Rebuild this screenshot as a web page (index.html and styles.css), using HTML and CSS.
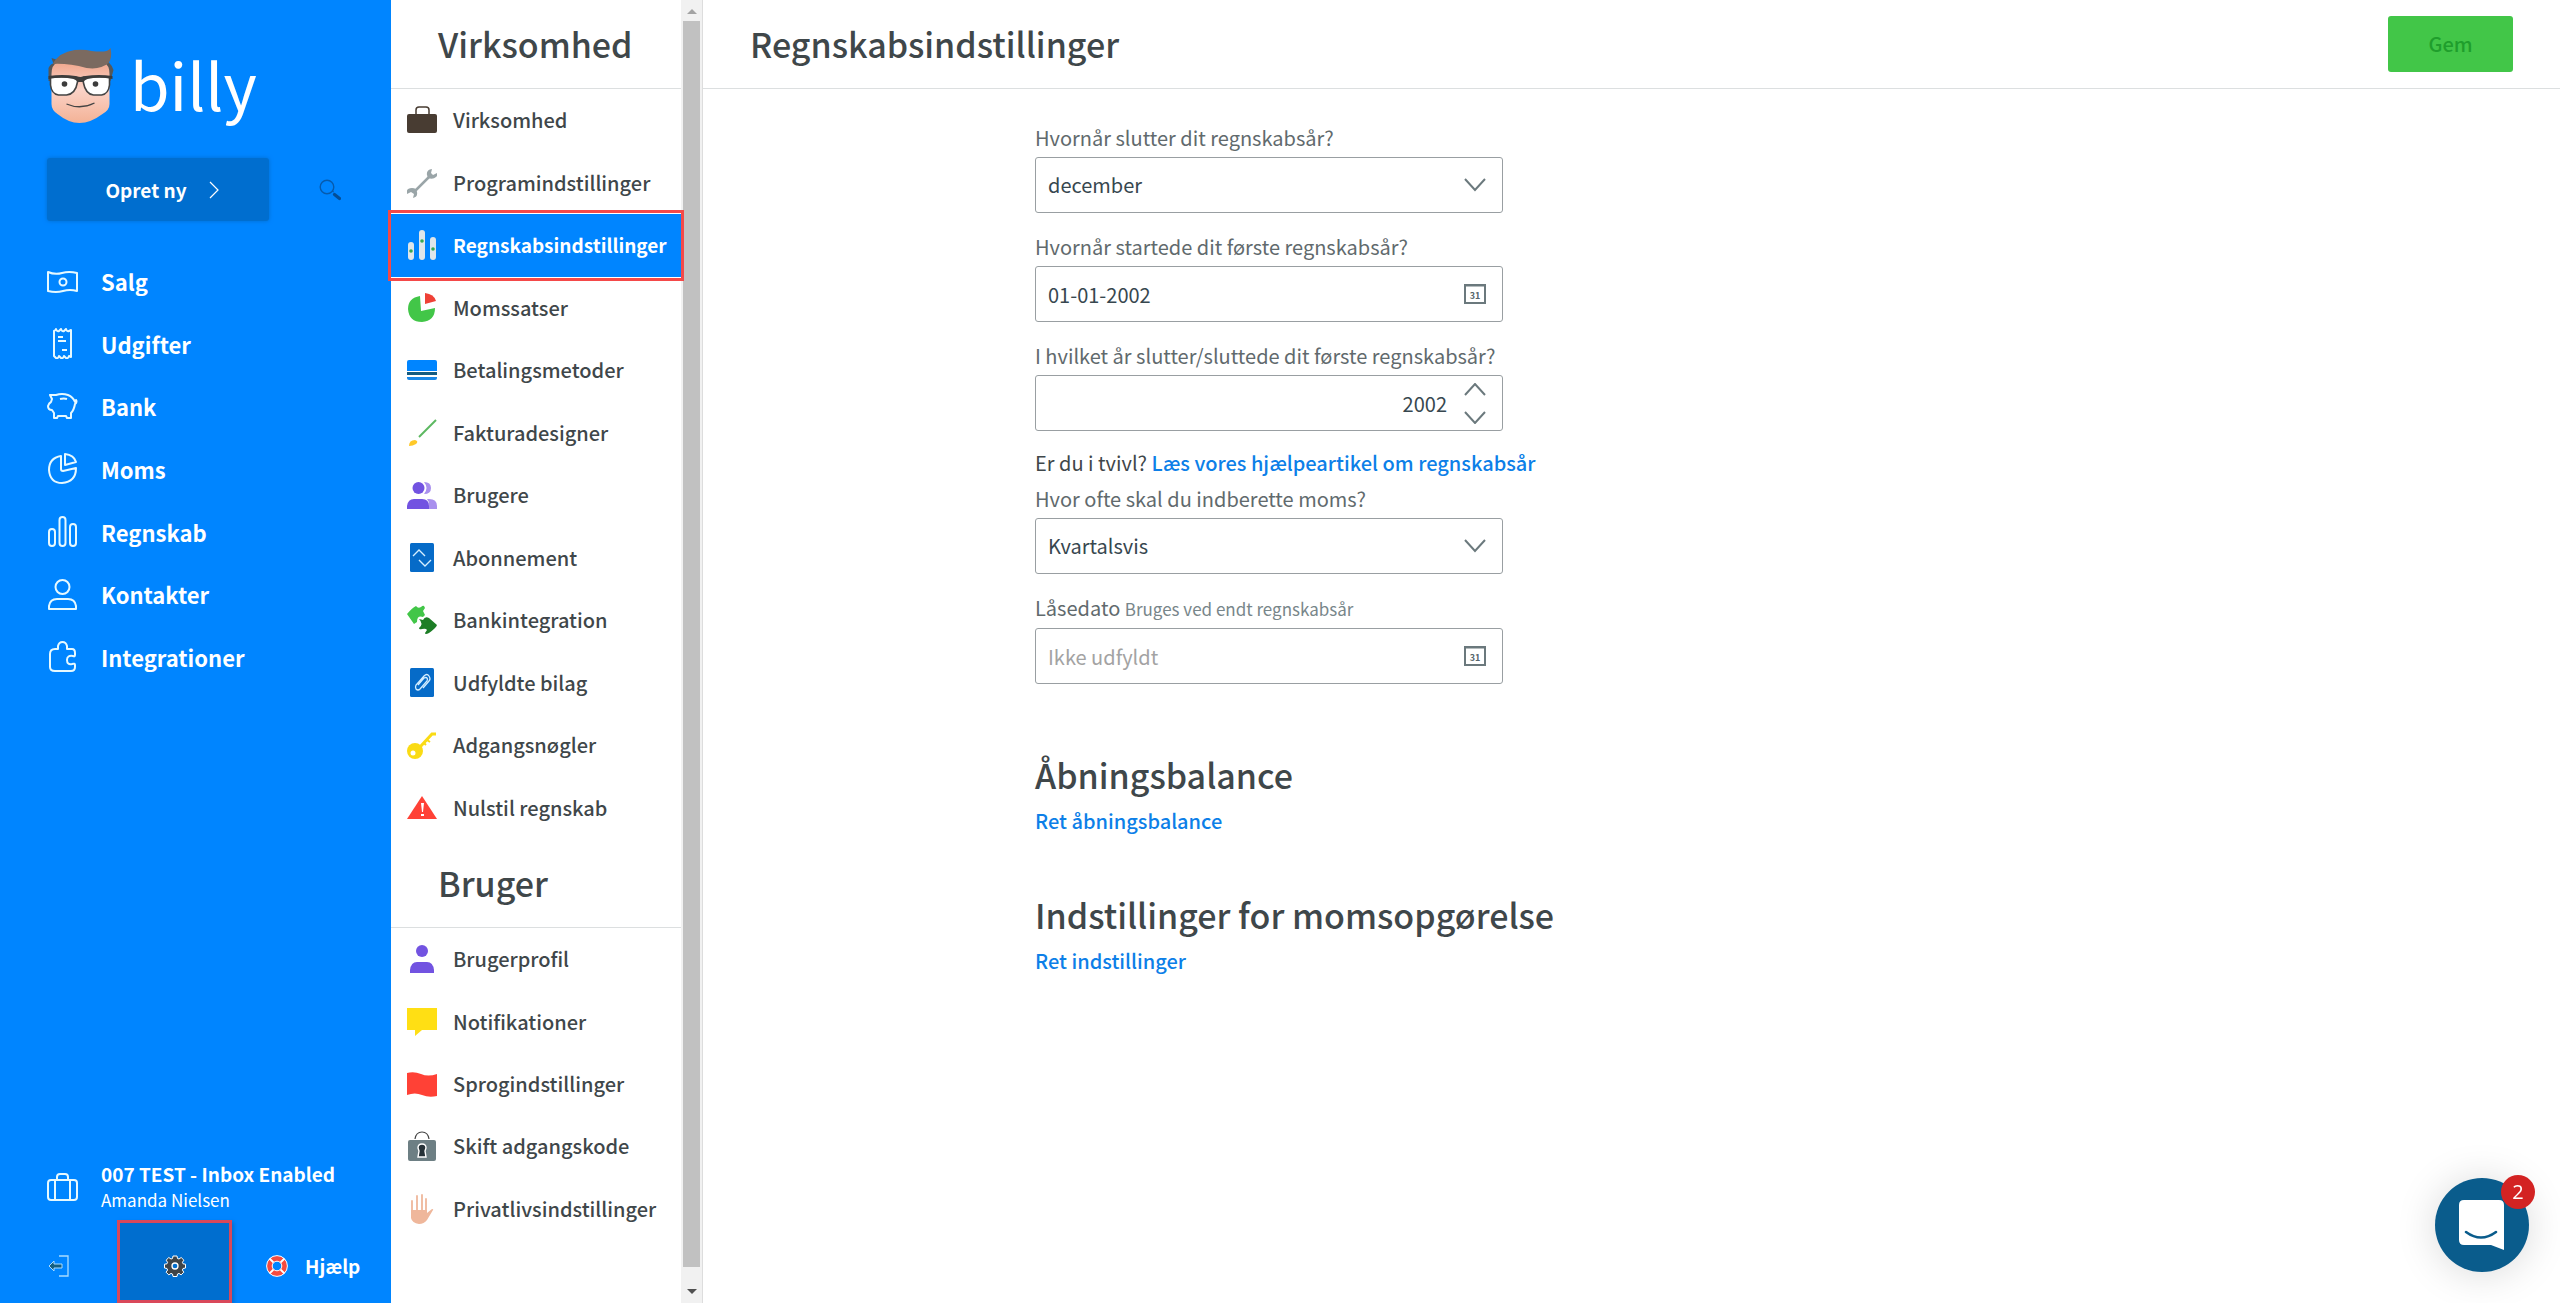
FILE: index.html
```html
<!DOCTYPE html>
<html lang="da">
<head>
    <meta charset="utf-8">
    <title>Regnskabsindstillinger - Billy</title>
    <meta name="viewport" content="width=device-width, initial-scale=1">
    <link rel="stylesheet" href="styles.css">
</head>
<body>
    <aside class="sidebar">
        <a class="logo" href="#">
            <svg class="logo-face" viewBox="0 0 66 76" aria-hidden="true">
                <defs>
                    <linearGradient id="skin" x1="0" y1="0" x2="0" y2="1">
                        <stop offset="0" stop-color="#f0a68c"/>
                        <stop offset=".45" stop-color="#fbd3c8"/>
                        <stop offset="1" stop-color="#f3b296"/>
                    </linearGradient>
                </defs>
                <path d="M1 33V20q3-5 5-4l-2-6 6 2q22-10 46 4l5-2q4 4 5 8l-3 11z" fill="#55585a"/>
                <path d="M4 26q0-9 6-12h46q6 3 6 12v30q0 6-7 10-12 9-23 9T10 66q-6-4-6-10z" fill="url(#skin)"/>
                <path d="M5 16Q12 4 27 2q10-1 17 1 10 1 15 0 3-1 4-3 2 10-2 15-8 7-22 5Q20 15 5 16z" fill="#7b6a60"/>
                <path d="M3 29h25q3 0 2 5-2 12-11 13H11q-7-1-8-10zM36 29h26v8q-1 9-8 10h-8q-8-1-10-12-1-6 0-6z" fill="#fff" stroke="#444" stroke-width="1.6"/>
                <path d="M1 28q14-2 27 0 4 1 5 1l5-1q13-2 27 0v3q-14-3-25 0-3 1-4 3h-6q-1-2-4-3-12-3-25 0z" fill="#3c3c3c"/>
                <circle cx="17" cy="36" r="2.8" fill="#3c3c3c"/>
                <circle cx="48" cy="36" r="2.8" fill="#3c3c3c"/>
                <path d="M19 56q14 6 28-1" fill="none" stroke="#444" stroke-width="1.3"/>
            </svg>
            <span class="logo-text">billy</span>
        </a>

        <div class="actions">
            <button class="create" type="button">
                Opret ny
                <svg width="10" height="18" viewBox="0 0 10 18" aria-hidden="true"><path d="M1 1l8 8-8 8" fill="none" stroke="#fff" stroke-width="1.2"/></svg>
            </button>
            <button class="search" type="button" aria-label="Søg">
                <svg width="22" height="22" viewBox="0 0 22 22" aria-hidden="true"><circle cx="8" cy="8" r="6.8" fill="none" stroke="#075bad" stroke-width="1.4"/><path d="M13 12l2 1" stroke="#075bad"/><path d="M15.500 15.500l5 4" stroke="#044e96" stroke-width="3.200" stroke-linecap="round"/></svg>
            </button>
        </div>

        <nav class="main-nav">
            <a href="#">
                <svg class="icon" viewBox="0 0 31 31"><path d="M1 6q7 3 14 1t15 0v18q-7-2-14 0t-15 0z"/><circle cx="16" cy="16" r="3.500"/></svg>
                Salg
            </a>
            <a href="#">
                <svg class="icon" viewBox="0 0 31 31"><path d="M7 3q2-1 2-2 1 3 3 2 2-2 2-2 1 3 3 2 2-2 2-2 1 3 3 2l2-1v27q-2-1-2-1-1 3-3 2-2-2-2-2-1 3-3 2-2-2-2-2-1 3-3 2-2-2-2-2zM11 9h5M11 13h8M15 22h5"/></svg>
                Udgifter
            </a>
            <a href="#">
                <svg class="icon" viewBox="0 0 31 31"><path d="M3 4h6q6-2 12 0 5 2 7 7l1-2q1 1 0 3l-1 1q-1 6-4 9v5h-4l-1-2h-8l-1 2H7v-5l-2-3q-4 0-4-4 1-3 3-4l1-3zM13 8q4-1 7 0"/></svg>
                Bank
            </a>
            <a href="#">
                <svg class="icon" viewBox="0 0 31 31"><path d="M14 3Q2 5 2 17q1 13 13 13 14-1 14-15L16 18q-2 0-2-2zM18 1v11l11-3Q27 2 18 1z"/></svg>
                Moms
            </a>
            <a href="#">
                <svg class="icon" viewBox="0 0 31 31"><rect x="2" y="13" width="6" height="17" rx="3"/><rect x="12.500" y="1" width="6" height="29" rx="3"/><rect x="23" y="8" width="6" height="22" rx="3"/></svg>
                Regnskab
            </a>
            <a href="#">
                <svg class="icon" viewBox="0 0 31 31"><circle cx="15.500" cy="8" r="7"/><path d="M2 30v-3q1-7 8-7h11q7 0 8 7v3z"/></svg>
                Kontakter
            </a>
            <a href="#">
                <svg class="icon" viewBox="0 0 31 31"><path d="M11 8V5q1-4 4.500-4T20 5v3h5q3 0 3 4v2q0 2-2 1-6-1-6 4t5 4q3-1 3 1v2q0 4-4 4H8q-5 0-5-4V13q0-5 5-5z"/></svg>
                Integrationer
            </a>
        </nav>

        <div class="account">
            <svg class="icon" viewBox="0 0 31 31" aria-hidden="true"><rect x="1" y="8" width="29" height="20" rx="3"/><path d="M8 8v20M23 8v20M10 8V5q0-3 3-3h5q3 0 3 3v3"/></svg>
            <div>
                <strong class="company">007 TEST - Inbox Enabled</strong>
                <span class="user">Amanda Nielsen</span>
            </div>
        </div>

        <div class="tools">
            <a class="tool" href="#" aria-label="Log ud">
                <svg width="22" height="22" viewBox="0 0 22 22"><path d="M11 1h9v20h-9" fill="none" stroke="#a8dcff" stroke-width="1.300"/><path d="M1 11l5-5v3h8v4H6v3z" fill="#155f80" stroke="#a8dcff"/></svg>
            </a>
            <a class="tool tool-active" href="#" aria-label="Indstillinger">
                <svg width="22" height="22" viewBox="0 0 22 22"><path d="M9 1h4l.5 2.500 1.500.5 2.200-1.500 2.700 2.700L18.400 7.300l.6 1.500 2.500.4v3.800l-2.500.5-.6 1.500 1.400 2.200-2.700 2.700L15 18.400l-1.500.6-.5 2.500H9L8.500 19 7 18.400l-2.200 1.500-2.700-2.700L3.600 15 3 13.500.5 13V9.200L3 8.800l.6-1.500-1.500-2.100 2.700-2.700L7 4l1.500-.5z" fill="#3f4447" stroke="#fff"/><circle cx="11" cy="11" r="3" fill="#006ecf" stroke="#fff" stroke-width="1.300"/></svg>
            </a>
            <a class="tool tool-help" href="#">
                <svg width="22" height="22" viewBox="0 0 22 22" aria-hidden="true"><circle cx="11" cy="11" r="7.500" fill="none" stroke="#f54b3f" stroke-width="5.500"/><g fill="none" stroke="#fff"><circle cx="11" cy="11" r="10.400"/><circle cx="11" cy="11" r="4.800"/><path d="M3.500 3.500l4 4M18.500 3.500l-4 4M3.500 18.500l4-4M18.500 18.500l-4-4" stroke-width="1.800"/></g></svg>
                Hjælp
            </a>
        </div>
    </aside>

    <div class="settings">
        <div class="settings-body">
            <h2 class="title">Virksomhed</h2>
            <nav class="sub-nav sub-nav-company">
                <a href="#">
                    <svg class="glyph" viewBox="0 0 30 30"><path d="M9 10V5q0-3 3-3h7q3 0 3 3v5" fill="none" stroke="#483c32" stroke-width="1.500"/><rect y="9" width="30" height="19" rx="2" fill="#483c32"/></svg>
                    Virksomhed
                </a>
                <a href="#">
                    <svg class="glyph" viewBox="0 0 30 30"><path d="M8 23L23 8" stroke="#9aa5a8" stroke-width="2.500"/><path d="M25 1q-6 1-5 6l1 3q5 2 8-1 2-2 1-4l-4 2-2-2zM1 21q4-2 8 0l1 3q1 5-4 6l1-4-3-2-4 2q-1-3 1-5z" fill="#9aa5a8"/></svg>
                    Programindstillinger
                </a>
                <a class="active" href="#">
                    <svg class="glyph" viewBox="0 0 30 30"><g fill="#dfe6ea"><rect x="1" y="12" width="6" height="18" rx="3"/><rect x="12" y="0" width="6" height="30" rx="3"/><rect x="23" y="7" width="6" height="23" rx="3"/></g><g fill="#35a853"><circle cx="4" cy="21" r="1.800"/><circle cx="15" cy="11" r="1.800"/><circle cx="26" cy="19" r="1.800"/></g></svg>
                    Regnskabsindstillinger
                </a>
                <a href="#">
                    <svg class="glyph" viewBox="0 0 30 30"><path d="M13 3Q1 5 1 16q1 13 14 13 13-1 13-14l-14 3z" fill="#42c648"/><path d="M18 0v11l11-3Q27 1 18 0z" fill="#ef4136"/></svg>
                    Momssatser
                </a>
                <a href="#">
                    <svg class="glyph" viewBox="0 0 30 30"><path d="M0 16V7q0-2 2-2h26q2 0 2 2v9z" fill="#0085ff"/><path d="M0 17h30v3H0z" fill="#155b80"/><path d="M0 22h30v1q0 2-2 2H2q-2 0-2-2z" fill="#1787e8"/></svg>
                    Betalingsmetoder
                </a>
                <a href="#">
                    <svg class="glyph" viewBox="0 0 30 30"><path d="M12 19L29 2" stroke="#5cb860" stroke-width="2"/><path d="M2 28q0-6 6-6 4 1 1 4-3 2-7 2z" fill="#ffc928"/></svg>
                    Fakturadesigner
                </a>
                <a href="#">
                    <svg class="glyph" viewBox="0 0 30 30"><path d="M17 2q7 0 7 6t-7 6q5-6 0-12zM22 29v-4q0-4-2-6 10-1 10 7v3z" fill="#a990ee"/><circle cx="11.500" cy="8" r="6" fill="#7253e1"/><path d="M0 29v-3q1-7 7-7h8q7 0 7 7v3z" fill="#7253e1"/></svg>
                    Brugere
                </a>
                <a href="#">
                    <svg class="glyph" viewBox="0 0 30 30"><rect x="3" y="0" width="24" height="29" rx="1.500" fill="#066bc8"/><path d="M6 13l6-6 6 6M12 17l6 6 6-6" fill="none" stroke="#d4eeff" stroke-width="1.400"/></svg>
                    Abonnement
                </a>
                <a href="#">
                    <svg class="glyph" viewBox="0 0 30 30"><path d="M0 9q5-6 9-8 2 3 5 1 2-2 3-1l1 2-2 3 2 4-2 2q-6-2-6 5l-3 2z" fill="#42c648"/><path d="M12 14l4 1q2-4 6-2l8 7q-1 3-8 8-4 2-4 0l2-3q-1-2-5-1-3 1-3-1 5-4 0-9z" fill="#1d7e26"/></svg>
                    Bankintegration
                </a>
                <a href="#">
                    <svg class="glyph" viewBox="0 0 30 30"><rect x="3" y="0" width="24" height="29" rx="1.500" fill="#066bc8"/><path d="M11 17l6-7q2-1 3 0t0 3l-7 8q-2 2-4 0-1-2 0-4l8-9q3-3 5 0 2 3 0 5l-6 7" fill="none" stroke="#d4eeff" stroke-width="1.300"/></svg>
                    Udfyldte bilag
                </a>
                <a href="#">
                    <svg class="glyph" viewBox="0 0 30 30"><path d="M13 17L25 4h4" fill="none" stroke="#fadb14" stroke-width="3"/><path d="M20 10l3 2M17 13l2 2" stroke="#fadb14" stroke-width="2"/><circle cx="8" cy="21" r="8" fill="#fadb14"/><circle cx="6" cy="23" r="2.500" fill="#fff"/></svg>
                    Adgangsnøgler
                </a>
                <a href="#">
                    <svg class="glyph" viewBox="0 0 30 30"><path d="M15 3l15 23H0z" fill="#ff4136"/><path d="M14 10h3l-1 9h-1zM14 21h3v2h-3z" fill="#fff"/></svg>
                    Nulstil regnskab
                </a>
            </nav>

            <h2 class="title">Bruger</h2>
            <nav class="sub-nav sub-nav-user">
                <a href="#">
                    <svg class="glyph" viewBox="0 0 30 30"><circle cx="15" cy="7" r="6" fill="#7253e1"/><path d="M3 29v-3q1-8 7-8h10q6 0 7 8v3z" fill="#7253e1"/></svg>
                    Brugerprofil
                </a>
                <a href="#">
                    <svg class="glyph" viewBox="0 0 30 30"><path d="M0 1h30v22H15l-7 6v-6H0z" fill="#ffdf14"/></svg>
                    Notifikationer
                </a>
                <a href="#">
                    <svg class="glyph" viewBox="0 0 30 30"><path d="M0 4q7-2 14 1t16 0v22q-8 2-15-1t-15 0z" fill="#ff4136"/></svg>
                    Sprogindstillinger
                </a>
                <a href="#">
                    <svg class="glyph" viewBox="0 0 30 30"><path d="M8 8q1-7 7-7t7 7" fill="none" stroke="#444" stroke-width="1.200"/><rect x="1" y="9" width="28" height="21" rx="2" fill="#6d7f84"/><path d="M15 13q4 0 4 4l-1 3 1 6h-8l1-6-1-3q0-4 4-4z" fill="#263238" stroke="#fff" stroke-width="1.400"/></svg>
                    Skift adgangskode
                </a>
                <a href="#">
                    <svg class="glyph" viewBox="0 0 30 30"><path d="M4 16h16v3l5-4q2 0 1 1l-6 10q-3 4-8 4-7-1-8-6z" fill="#efb79b"/><path d="M5 17V7M10 17V2M15 17V1M19 18V5" stroke="#efb79b" stroke-width="1.800" stroke-linecap="round"/></svg>
                    Privatlivsindstillinger
                </a>
            </nav>
        </div>
        <div class="scrollbar" aria-hidden="true">
            <svg width="10" height="21" viewBox="0 0 10 21"><path d="M0 14l5-5 5 5z" fill="#a3a3a3"/></svg>
            <div class="scrollbar-thumb"></div>
            <svg width="10" height="36" viewBox="0 0 10 36"><path d="M0 22l5 5 5-5z" fill="#505050"/></svg>
        </div>
    </div>

    <main class="content">
        <header class="topbar">
            <h1>Regnskabsindstillinger</h1>
            <button class="save" type="submit" form="settings-form" disabled>Gem</button>
        </header>

        <div class="page">
            <form id="settings-form">
                <div class="field">
                    <label for="year-end">Hvornår slutter dit regnskabsår?</label>
                    <div class="control">
                        <select id="year-end"><option>december</option></select>
                        <svg class="control-icon" width="22" height="14" viewBox="0 0 22 14" aria-hidden="true"><path d="M1 1l10 11L21 1"/></svg>
                    </div>
                </div>
                <div class="field">
                    <label for="first-start">Hvornår startede dit første regnskabsår?</label>
                    <div class="control">
                        <input id="first-start" type="text" value="01-01-2002">
                        <svg class="control-icon" width="22" height="20" viewBox="0 0 22 20" aria-hidden="true"><path d="M1 1h20v18H1z"/><path d="M0 1.500h22" stroke-width="3"/><text x="11" y="15">31</text></svg>
                    </div>
                </div>
                <div class="field field-tight">
                    <label for="first-end">I hvilket år slutter/sluttede dit første regnskabsår?</label>
                    <div class="control">
                        <input id="first-end" class="number" type="text" inputmode="numeric" value="2002">
                        <div class="stepper">
                            <button type="button" aria-label="Op"><svg width="22" height="13" viewBox="0 0 22 13"><path d="M1 12L11 1l10 11"/></svg></button>
                            <button type="button" aria-label="Ned"><svg width="22" height="13" viewBox="0 0 22 13"><path d="M1 1l10 11L21 1"/></svg></button>
                        </div>
                    </div>
                </div>
                <p class="hint">Er du i tvivl? <a href="#">Læs vores hjælpeartikel om regnskabsår</a></p>
                <div class="field">
                    <label for="vat-period">Hvor ofte skal du indberette moms?</label>
                    <div class="control">
                        <select id="vat-period"><option>Kvartalsvis</option></select>
                        <svg class="control-icon" width="22" height="14" viewBox="0 0 22 14" aria-hidden="true"><path d="M1 1l10 11L21 1"/></svg>
                    </div>
                </div>
                <div class="field">
                    <label for="lock-date">Låsedato <small>Bruges ved endt regnskabsår</small></label>
                    <div class="control">
                        <input id="lock-date" type="text" placeholder="Ikke udfyldt">
                        <svg class="control-icon" width="22" height="20" viewBox="0 0 22 20" aria-hidden="true"><path d="M1 1h20v18H1z"/><path d="M0 1.500h22" stroke-width="3"/><text x="11" y="15">31</text></svg>
                    </div>
                </div>
            </form>

            <section class="section">
                <h2>Åbningsbalance</h2>
                <a href="#">Ret åbningsbalance</a>
            </section>
            <section class="section">
                <h2>Indstillinger for momsopgørelse</h2>
                <a href="#">Ret indstillinger</a>
            </section>
        </div>
    </main>

    <button class="chat" type="button" aria-label="Åbn chat">
        <svg width="46" height="50" viewBox="0 0 46 50" aria-hidden="true"><path d="M5 0h35q5 0 5 5v45l-13-5H5q-5 0-5-5V5q0-5 5-5z" fill="#fff"/><path d="M7 32q15 11 30 0" fill="none" stroke="#0a5c8c" stroke-width="2.600" stroke-linecap="round"/></svg>
        <span class="chat-badge">2</span>
    </button>
</body>
</html>
```
FILE: styles.css
```css
* {
    box-sizing: border-box;
}
body {
    display: flex;
    min-height: 100vh;
    margin: 0;
    background: #fff;
    color: #3f474a;
    font-family: "Noto Sans CJK JP", "Noto Sans", sans-serif;
    font-size: 20px;
    line-height: 30px;
}
h1, h2, p {
    margin: 0;
}
h1, h2 {
    font-size: 34px;
    font-weight: 500;
    line-height: 48px;
}
a {
    color: #0d7fe8;
    font-weight: 500;
    text-decoration: none;
}
button, input, select {
    font: inherit;
}
button {
    padding: 0;
    border: 0;
    background: none;
    cursor: pointer;
}

/* Blue sidebar */
.sidebar {
    display: flex;
    flex: none;
    flex-direction: column;
    width: 391px;
    background: #0085ff;
    color: #fff;
}
.sidebar a {
    color: #fff;
}
.logo {
    display: flex;
    align-items: flex-start;
    gap: 16px;
    padding: 48px 47px 0;
}
.logo-face {
    width: 67px;
    height: 76px;
}
.logo-text {
    font-size: 64px;
    font-weight: 400;
    line-height: 70px;
}
.actions {
    display: flex;
    align-items: center;
    justify-content: space-between;
    padding: 34px 50px 29px 47px;
}
.create {
    display: flex;
    align-items: center;
    justify-content: center;
    gap: 22px;
    width: 222px;
    height: 63px;
    padding-left: 8px;
    border-radius: 3px;
    background: #006ecf;
    box-shadow: 0 0 4px #006ecf;
    color: #fff;
    font-size: 19px;
    font-weight: 700;
}
.search {
    display: flex;
}
.main-nav {
    display: grid;
    grid-auto-rows: 1fr;
    min-height: 438px;
}
.main-nav a {
    display: flex;
    align-items: center;
    gap: 23px;
    padding: 0 47px;
    font-size: 22px;
    font-weight: 700;
}
.icon {
    flex: none;
    width: 31px;
    height: 31px;
    fill: none;
    stroke: #e6f9ff;
    stroke-width: 2;
    stroke-linejoin: round;
}
.account {
    display: flex;
    align-items: center;
    gap: 23px;
    margin-top: auto;
    padding: 0 40px 0 47px;
    white-space: nowrap;
}
.company, .user {
    display: block;
    line-height: 26px;
}
.company {
    font-size: 19px;
}
.user {
    font-size: 17px;
}
.tools {
    display: flex;
    height: 83px;
    margin-top: 7px;
}
.tool {
    display: flex;
    align-items: center;
    justify-content: center;
    width: 117px;
    padding-top: 8px;
}
.tool-active {
    width: 115px;
    border: 3px solid #d9485a;
    background: #006ecf;
    box-shadow: 2px 2px 4px #006ecf;
}
.sidebar .tool-help {
    flex: 1;
    justify-content: flex-start;
    gap: 17px;
    padding-left: 34px;
    font-size: 19px;
    font-weight: 700;
}

/* Settings menu */
.settings {
    display: flex;
    flex: none;
    width: 312px;
    border-right: 1px solid #ddd;
}
.settings-body {
    flex: 1;
}
.title {
    padding: 20px 47px;
    border-bottom: 1px solid #dcdfe0;
}
.sub-nav {
    display: grid;
    grid-auto-rows: 1fr;
}
.sub-nav-company {
    min-height: 750px;
}
.sub-nav-user {
    min-height: 312px;
}
.sub-nav a {
    display: flex;
    position: relative;
    align-items: center;
    gap: 16px;
    padding-left: 16px;
    color: #3f474a;
    white-space: nowrap;
}
.sub-nav .active {
    background: #0085ff;
    color: #fff;
    font-size: 19px;
    font-weight: 700;
}
.sub-nav .active::after {
    content: "";
    position: absolute;
    inset: -4px -3px;
    border: 3px solid #f44949;
}
.glyph {
    flex: none;
    width: 30px;
    height: 30px;
}
.scrollbar {
    display: flex;
    flex-direction: column;
    align-items: center;
    width: 21px;
    padding: 0 2px;
    background: #f1f1f1;
}
.scrollbar-thumb {
    flex: 1;
    width: 100%;
    background: #c1c1c1;
}

/* Main column */
.content {
    flex: 1;
    min-width: 0;
}
.topbar {
    display: flex;
    align-items: center;
    justify-content: space-between;
    height: 89px;
    padding: 0 47px;
    border-bottom: 1px solid #dcdfe0;
}
.save {
    width: 125px;
    height: 56px;
    border-radius: 3px;
    background: #42c648;
    color: #1f9e2c;
    font-weight: 500;
}
.page {
    max-width: 1193px;
    margin: 0 auto;
    padding-top: 38px;
}
.field {
    margin-bottom: 23px;
}
.field-tight {
    margin-bottom: 17px;
}
.field label {
    display: block;
    margin-bottom: 8px;
    color: #616a6d;
    line-height: 22px;
}
.field small {
    color: #78868a;
    font-size: 17px;
}
.control {
    display: flex;
    position: relative;
    align-items: center;
    max-width: 468px;
}
.control input, .control select {
    width: 100%;
    height: 56px;
    padding: 0 55px 0 12px;
    border: 1px solid #999fa2;
    border-radius: 3px;
    background: #fff;
    color: #37474f;
    appearance: none;
}
.control input::placeholder {
    color: #a3a3a3;
}
.control .number {
    text-align: right;
}
.control-icon, .stepper {
    position: absolute;
    right: 17px;
}
.control-icon {
    pointer-events: none;
}
.control-icon path, .stepper path {
    fill: none;
    stroke: #6b797d;
    stroke-width: 2;
}
.control-icon text {
    fill: #55646a;
    font-size: 9px;
    font-weight: 700;
    text-anchor: middle;
}
.stepper {
    display: grid;
    gap: 15px;
}
.stepper button {
    display: flex;
}
.hint {
    margin-bottom: 10px;
}
.section {
    padding-top: 44px;
}
.section + .section {
    padding-top: 55px;
}
.section h2 {
    margin-bottom: 7px;
}

/* Chat launcher */
.chat {
    display: flex;
    position: fixed;
    right: 31px;
    bottom: 31px;
    align-items: center;
    justify-content: center;
    width: 94px;
    height: 94px;
    border-radius: 50%;
    background: #0a5c8c;
    box-shadow: 0 2px 40px rgba(0, 0, 0, .15);
}
.chat-badge {
    position: absolute;
    top: -3px;
    right: -6px;
    width: 34px;
    height: 34px;
    border-radius: 50%;
    background: #d32323;
    color: #fff;
    font-family: "Open Sans", "Noto Sans", sans-serif;
    line-height: 34px;
}
```
